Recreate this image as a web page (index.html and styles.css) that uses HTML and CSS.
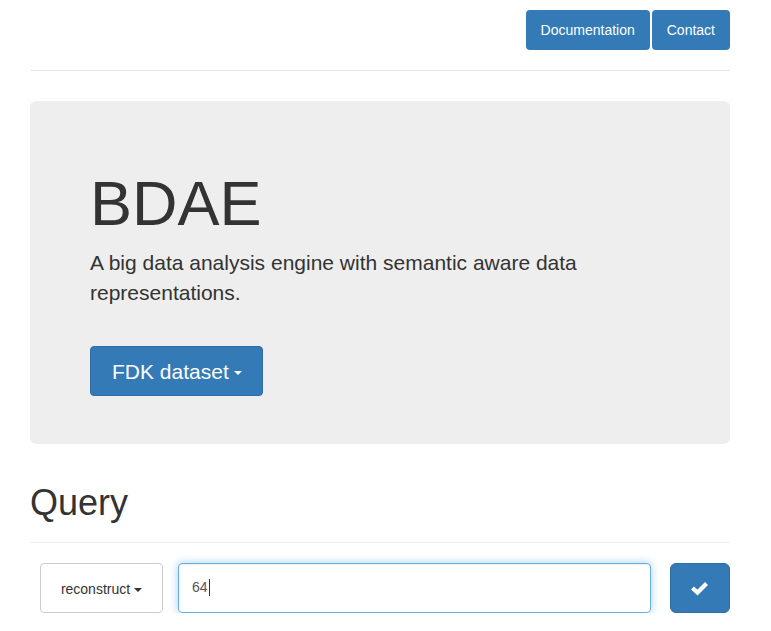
FILE: index.html
```html
<!DOCTYPE html>
<html>
<head>
<meta charset="utf-8">
<link rel="stylesheet" href="styles.css">
</head>
<body>
<div class="container">
  <header class="header">
    <nav class="pills">
      <a class="pill">Documentation</a>
      <a class="pill">Contact</a>
    </nav>
  </header>
  <section class="jumbotron">
    <h1 class="title">BDAE</h1>
    <p class="lead">A big data analysis engine with semantic aware data representations.</p>
    <button class="btn btn-primary btn-lg">FDK dataset <span class="caret"></span></button>
  </section>
  <div class="page-header">
    <h1 class="section-title">Query</h1>
  </div>
  <div class="query-row">
    <button class="btn btn-default btn-op">reconstruct <span class="caret dark"></span></button>
    <div class="fake-input"><span>64</span><span class="cursor"></span></div>
    <button class="btn btn-primary btn-ok" aria-label="ok">
      <svg width="20" height="16" viewBox="0 0 20 16"><polyline points="2.5,8 7.5,12.5 16.5,3.5" fill="none" stroke="#fff" stroke-width="4.2" stroke-linecap="butt" stroke-linejoin="miter"/></svg>
    </button>
  </div>
</div>
</body>
</html>
```
FILE: styles.css
```css
* { box-sizing: border-box; }
html, body { margin: 0; padding: 0; background: #fff; }
body {
  font-family: "Liberation Sans", Arial, Helvetica, sans-serif;
  font-size: 14px;
  line-height: 1.42857;
  color: #333;
}
.container {
  width: 700px;
  margin-left: 30px;
}
.header {
  padding-top: 10px;
  padding-bottom: 20px;
  border-bottom: 1px solid #e5e5e5;
}
.pills {
  display: flex;
  justify-content: flex-end;
  gap: 2px;
}
.pill {
  display: block;
  padding: 10px 15px;
  line-height: 20px;
  font-size: 14px;
  color: #fff;
  background: #337ab7;
  border-radius: 4px;
  text-decoration: none;
}
.jumbotron {
  margin-top: 30px;
  background: #eee;
  border-radius: 6px;
  padding: 68px 60px 48px;
}
.title {
  margin: 0 0 10px;
  font-size: 63px;
  line-height: 1.1;
  font-weight: 500;
}
.lead {
  margin: 0 0 38px;
  font-size: 21px;
  line-height: 30px;
  font-weight: 300;
  width: 560px;
}
.btn {
  font-family: inherit;
  display: inline-flex;
  align-items: center;
  justify-content: center;
  border: 1px solid transparent;
  cursor: pointer;
  margin: 0;
}
.btn-primary {
  background: #337ab7;
  border-color: #2e6da4;
  color: #fff;
}
.btn-lg {
  height: 50px;
  padding: 2px 20px 0 21px;
  font-size: 21px;
  line-height: 28px;
  border-radius: 4px;
}
.caret {
  display: inline-block;
  width: 0;
  height: 0;
  margin-left: 5px;
  border-top: 4px solid #fff;
  border-left: 4px solid transparent;
  border-right: 4px solid transparent;
  margin-top: 2px;
}
.caret.dark { border-top-color: #333; margin-left: 4px; }
.page-header {
  margin-top: 39px;
  padding-bottom: 9px;
  border-bottom: 1px solid #eee;
}
.section-title {
  margin: 0 0 10px;
  font-size: 36px;
  line-height: 1.1;
  font-weight: 500;
}
.query-row {
  display: flex;
  align-items: stretch;
  margin-top: 20px;
  padding-left: 10px;
  height: 50px;
}
.btn-default {
  background: #fff;
  border-color: #ccc;
  color: #333;
}
.btn-op {
  width: 123px;
  font-size: 14px;
  border-radius: 4px;
  padding: 2px 0 0;
}
.fake-input {
  margin-left: 15px;
  width: 473px;
  border: 1px solid #66afe9;
  border-radius: 4px;
  box-shadow: inset 0 1px 1px rgba(0,0,0,.075), 0 0 8px rgba(102,175,233,.6);
  display: flex;
  align-items: center;
  padding-left: 13px;
  font-size: 14px;
  color: #555;
}
.cursor {
  display: inline-block;
  width: 1px;
  height: 17px;
  background: #333;
  margin-left: 1px;
}
.btn-ok {
  margin-left: 19px;
  width: 60px;
  border-radius: 6px;
  padding: 0;
}
.btn-ok svg { display: block; }
```
